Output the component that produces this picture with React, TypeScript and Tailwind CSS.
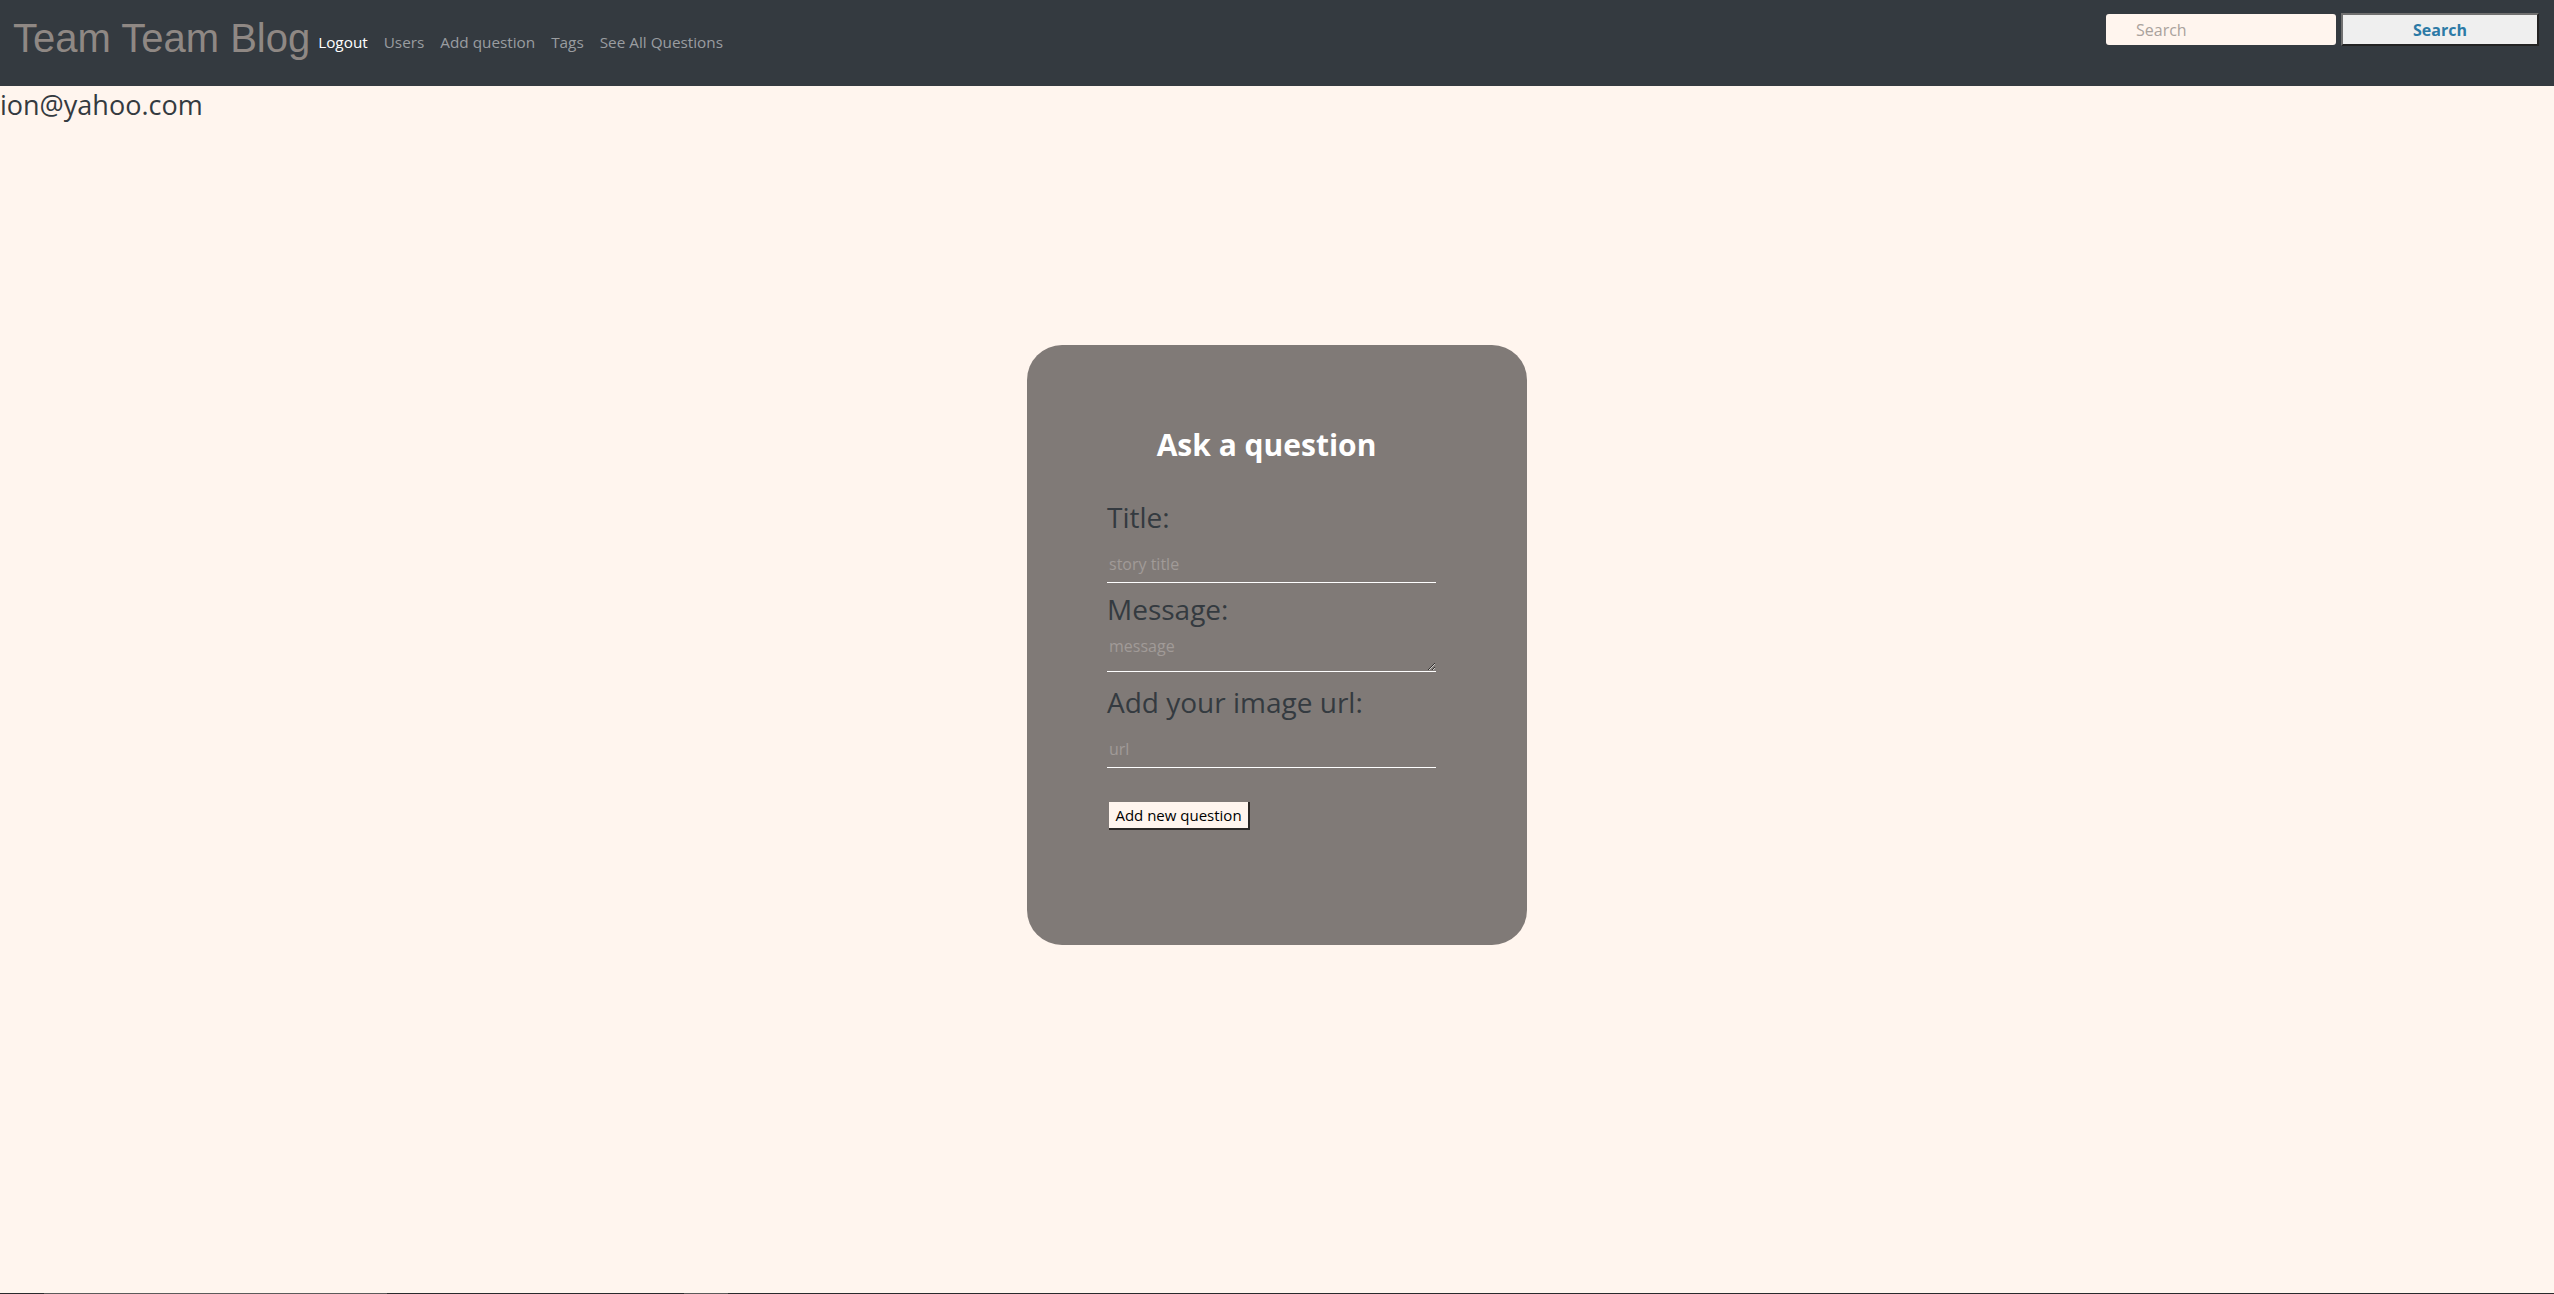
import React from "react";

const navLinks = ["Users", "Add question", "Tags", "See All Questions"];

const App = () => {
  return (
    <div className="min-h-screen flex flex-col bg-[#fff5ee] font-['Open_Sans',sans-serif] text-[#343a40]">
      <nav className="h-[86px] bg-[#343a40] flex justify-between pl-[13px] pr-[15px]">
        <div className="flex items-start">
          <a className="mt-[18px] text-[40px] leading-none text-[#8f8884] font-['Liberation_Sans',Arial,sans-serif]">
            Team Team Blog
          </a>
          <a className="mt-[30px] px-2 text-[15.3px] leading-[24px] text-white">Logout</a>
          {navLinks.map((link) => (
            <a key={link} className="mt-[30px] px-2 text-[15.3px] leading-[24px] text-[#9a9da0]">
              {link}
            </a>
          ))}
        </div>
        <div className="flex items-start">
          <input
            type="text"
            placeholder="Search"
            className="mt-[14px] h-[31px] w-[230px] rounded-[3px] bg-[#fff5ee] pl-[30px] text-[16px] leading-[22px] placeholder-[#aaa29d] outline-none"
          />
          <button className="mt-[13px] ml-[5px] h-[33px] w-[198px] bg-[#efefef] border-2 border-t-[#707070] border-l-[#707070] border-b-[#232323] border-r-[#232323] text-[16px] font-bold text-[#2c7aa6]">
            Search
          </button>
        </div>
      </nav>

      <div className="mt-[3px] h-[32px] text-[27px] leading-[32px] text-[#343a40]">ion@yahoo.com</div>

      <form
        onSubmit={(e) => e.preventDefault()}
        className="mt-[224px] mx-auto w-[500px] h-[600px] rounded-[35px] bg-[#807a77] pl-[80px] pt-[82px]"
      >
        <div className="w-[329px]">
          <h2 className="text-center pr-[10px] text-[30px] leading-[36px] font-bold text-white">Ask a question</h2>

          <label className="block mt-[37px] text-[28px] leading-[34px] font-medium">Title:</label>
          <input
            type="text"
            placeholder="story title"
            className="block mt-[19px] w-full h-[30px] bg-transparent border-0 border-b border-white px-[2px] pb-[7px] text-[16px] leading-[22px] placeholder-[#a19b98] outline-none"
          />

          <label className="block mt-[9px] text-[28px] leading-[34px] font-medium">Message:</label>
          <textarea
            placeholder="message"
            className="block w-full h-[46px] bg-transparent border-0 border-b border-white px-[2px] pt-[9px] text-[16px] leading-[22px] placeholder-[#a19b98] outline-none"
          />

          <label className="block mt-[13px] text-[28px] leading-[34px] font-medium">Add your image url:</label>
          <input
            type="text"
            placeholder="url"
            className="block mt-[19px] w-full h-[30px] bg-transparent border-0 border-b border-white px-[2px] pb-[7px] text-[16px] leading-[22px] placeholder-[#a19b98] outline-none"
          />

          <button
            type="submit"
            className="block mt-[34px] ml-[2px] h-[28px] w-[141px] bg-[#fff5ee] border-r-2 border-b-2 border-[#2b2725] text-[15px] leading-[26px] text-black"
          >
            Add new question
          </button>
        </div>
      </form>

      <div className="flex-1" />
      <div className="h-px flex bg-[#2a2a2c]">
        <div className="w-[44px]" />
        <div className="w-[343px] bg-[#5c5a5a]" />
        <div className="w-[297px]" />
        <div className="w-[44px] bg-[#5c5a5a]" />
      </div>
    </div>
  );
};

export default App;
